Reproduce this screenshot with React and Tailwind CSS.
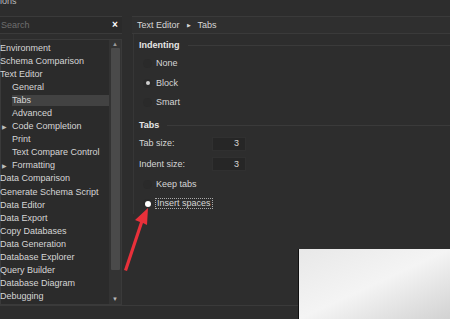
import React from "react";

const tree = [
  { label: "Environment", level: 0 },
  { label: "Schema Comparison", level: 0 },
  { label: "Text Editor", level: 0 },
  { label: "General", level: 1 },
  { label: "Tabs", level: 1, selected: true },
  { label: "Advanced", level: 1 },
  { label: "Code Completion", level: 1, arrow: true },
  { label: "Print", level: 1 },
  { label: "Text Compare Control", level: 1 },
  { label: "Formatting", level: 1, arrow: true },
  { label: "Data Comparison", level: 0 },
  { label: "Generate Schema Script", level: 0 },
  { label: "Data Editor", level: 0 },
  { label: "Data Export", level: 0 },
  { label: "Copy Databases", level: 0 },
  { label: "Data Generation", level: 0 },
  { label: "Database Explorer", level: 0 },
  { label: "Query Builder", level: 0 },
  { label: "Database Diagram", level: 0 },
  { label: "Debugging", level: 0 },
];

function GroupHeader({ title }) {
  return (
    <div className="flex items-center gap-2 h-[14px]">
      <span className="font-bold text-[#e6e6e6]">{title}</span>
      <div className="flex-1 border-t border-[#3a3a3a]" />
    </div>
  );
}

function Radio({ label, checked, focus }) {
  return (
    <div className="flex items-center h-[19.5px] pl-[4px]">
      <div className="w-[9px] h-[9px] rounded-full bg-[#2a2a2a] flex items-center justify-center">
        {checked && (
          <div
            className={
              focus
                ? "w-[6px] h-[6px] rounded-full bg-white"
                : "w-[4px] h-[4px] rounded-full bg-[#cfcfcf]"
            }
          />
        )}
      </div>
      <span
        className={
          "ml-[3px] px-[1px] " +
          (focus ? "border border-dotted border-[#aaa]" : "")
        }
      >
        {label}
      </span>
    </div>
  );
}

function NumberRow({ label, value }) {
  return (
    <div className="flex items-center h-[20.5px]">
      <span className="w-[73px]">{label}</span>
      <div className="w-[34px] h-[14px] bg-[#262626] border border-[#303030] flex items-center justify-end pr-[6px]">
        {value}
      </div>
    </div>
  );
}

export default function App() {
  return (
    <div
      className="relative w-[450px] h-[319px] bg-[#2d2d2d] text-[#d6d6d6] overflow-hidden flex flex-col text-[9px] leading-none"
      style={{ fontFamily: '"Liberation Sans", Arial, sans-serif' }}
    >
      {/* title strip */}
      <div className="h-[16px] relative">
        <span className="absolute left-[0px] top-[-3px] text-[#bbb]">ions</span>
      </div>

      <div className="flex flex-1">
        {/* left column */}
        <div className="w-[122px] flex flex-col">
          <div className="h-[18px] flex items-center bg-[#2a2a2a] border-y border-[#3a3a3a]">
            <span className="flex-1 pl-[1px] text-[#6e6e6e]">Search</span>
            <span className="w-[14px] text-center font-bold text-white text-[10px]">×</span>
          </div>
          <div className="mt-[5px] h-[266px] flex border border-[#3a3a3a] bg-[#2b2b2b]">
            <div className="flex-1 flex flex-col pt-[1.5px]">
              {tree.map((t) => (
                <div
                  key={t.label}
                  className={
                    "h-[13.1px] flex items-center relative " +
                    (t.level ? "pl-[11px]" : "")
                  }
                >
                  {t.arrow && (
                    <span className="absolute left-[1px] text-[6px] text-[#bbb]">▶</span>
                  )}
                  <span
                    className={
                      "whitespace-nowrap pr-[2px] py-[1px] " +
                      (t.selected ? "bg-[#424242] w-full" : "")
                    }
                    style={{ marginLeft: t.level ? 0 : -1 }}
                  >
                    {t.label}
                  </span>
                </div>
              ))}
            </div>
            {/* scrollbar */}
            <div className="w-[12px] flex flex-col items-center bg-[#333]">
              <span className="text-[6px] text-[#999] h-[8px] flex items-center">▲</span>
              <div className="w-[9px] h-[222px] bg-[#4a4a4a] rounded-[1px]" />
              <div className="flex-1" />
              <span className="text-[6px] text-[#bbb] h-[10px] flex items-center">▼</span>
            </div>
          </div>
        </div>

        {/* right column */}
        <div className="ml-[10px] flex-1 flex flex-col">
          <div className="h-[18px] flex items-center pl-[5px] bg-[#2f2f2f] border-y border-[#3a3a3a]">
            Text Editor
            <span className="mx-[7px] text-[5px]">▶</span>
            Tabs
          </div>
          <div className="pl-[5px] pt-[3px] flex flex-col border-l border-[#363636] ml-[1px]">
            <div className="mt-[1px]">
              <GroupHeader title="Indenting" />
            </div>
            <div className="mt-[2px]">
              <Radio label="None" />
              <Radio label="Block" checked />
              <Radio label="Smart" />
            </div>
            <div className="mt-[6px]">
              <GroupHeader title="Tabs" />
            </div>
            <div className="mt-[1px]">
              <NumberRow label="Tab size:" value="3" />
              <NumberRow label="Indent size:" value="3" />
            </div>
            <Radio label="Keep tabs" />
            <Radio label="Insert spaces" checked focus />
          </div>
        </div>
      </div>

      {/* bottom strip */}
      <div className="h-[14px] border-t border-[#3a3a3a]" />

      {/* red annotation arrow */}
      <svg className="absolute left-0 top-0 pointer-events-none" width="450" height="319">
        <path d="M124 270 L140 222 L135 220 L148 208 L147 225 L143 223 L127 271 Z" fill="#e8303a" />
      </svg>

      {/* mosaic patch */}
      <div className="absolute left-[298px] top-[249px] w-[152px] h-[70px] bg-gradient-to-br from-[#e8e8e8] via-[#f4f4f4] to-[#d2d2d2] border-l border-[#111]" />
    </div>
  );
}
